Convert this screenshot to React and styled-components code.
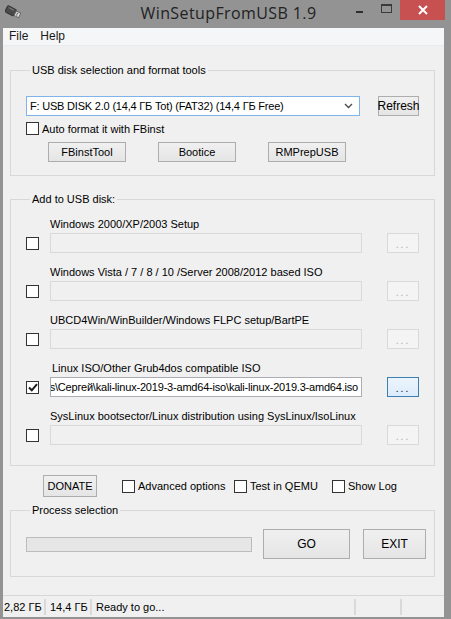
import React from 'react'
import styled, { createGlobalStyle } from 'styled-components'

const Global = createGlobalStyle`
  html, body { margin: 0; padding: 0; background: #939393; }
  * { box-sizing: border-box; }
`

const Window = styled.div`
  width: 451px;
  height: 619px;
  background: #939393;
  display: flex;
  flex-direction: column;
  font-family: "Liberation Sans", Arial, sans-serif;
  font-size: 11px;
  color: #000;
`

const TitleBar = styled.div`
  height: 28px;
  display: grid;
  grid-template-columns: 1fr auto 1fr;
  align-items: start;
`

const AppIcon = styled.div`
  padding: 5px 0 0 5px;
  display: flex;
`

const Title = styled.div`
  font-family: "Open Sans", "Noto Sans", sans-serif;
  font-size: 16px;
  letter-spacing: 0.4px;
  line-height: 26px;
  color: #222;
  padding-left: 6px;
`

const Controls = styled.div`
  justify-self: end;
  display: flex;
  align-items: flex-start;
  margin-right: 6px;
`

const MinBtn = styled.div`
  width: 7px;
  height: 2px;
  background: #2e2e2e;
  margin-top: 11px;
  margin-right: 18px;
`

const MaxBtn = styled.div`
  width: 11px;
  height: 9px;
  border: 1px solid #3a3a3a;
  border-top-width: 2px;
  margin-top: 4px;
  margin-right: 8px;
`

const CloseBtn = styled.div`
  width: 45px;
  height: 20px;
  background: #c75050;
  display: flex;
  align-items: center;
  justify-content: center;
`

const Client = styled.div`
  flex: 1;
  margin: 0 7px 2px 3px;
  background: #f0f0f0;
  display: flex;
  flex-direction: column;
`

const MenuBar = styled.div`
  height: 18px;
  background: #f5f6f7;
  border-bottom: 1px solid #e9eaeb;
  display: flex;
  align-items: center;
  font-size: 12px;
  color: #1a1a1a;
`

const MenuItem = styled.span`
  padding: 0 6px;
  line-height: 17px;
`

const Group = styled.fieldset`
  margin: ${p => p.$top}px 9px 0 7px;
  padding: ${p => p.$pt}px 15px ${p => p.$pb}px 15px;
  border: 1px solid #d8d8d8;
  min-width: 0;
`

const Legend = styled.legend`
  padding: 0 2px;
  margin-left: 4px;
  line-height: 14px;
  font-size: 11px;
  color: #000;
`

const Row = styled.div`
  display: flex;
  align-items: center;
  gap: ${p => p.$gap || 0}px;
  margin-top: ${p => p.$mt || 0}px;
  padding-left: ${p => p.$pl || 0}px;
`

const Combo = styled.div`
  width: 336px;
  height: 20px;
  background: #fff;
  border: 1px solid #7eb4ea;
  display: flex;
  align-items: center;
  justify-content: space-between;
  padding: 0 6px 0 3px;
  font-size: 11px;
  letter-spacing: -0.2px;
  white-space: nowrap;
`

const Button = styled.div`
  width: ${p => p.$w}px;
  height: ${p => p.$h || 20}px;
  margin-left: ${p => p.$ml || 0}px;
  margin-right: ${p => p.$mr || 0}px;
  border: 1px solid ${p => (p.$focus ? '#3c7fb1' : p.$disabled ? '#d9d9d9' : '#adadad')};
  background: ${p =>
    p.$focus
      ? 'linear-gradient(#ecf4fc, #dcecfc)'
      : p.$disabled
      ? '#f4f4f4'
      : 'linear-gradient(#f0f0f0, #e5e5e5)'};
  color: ${p => (p.$disabled ? '#a8a8a8' : '#000')};
  display: flex;
  align-items: center;
  justify-content: center;
  font-size: ${p => p.$fs || 11}px;
  flex-shrink: 0;
`

const Box = styled.div`
  width: 13px;
  height: 13px;
  border: 1px solid #333;
  background: #fff;
  display: flex;
  align-items: center;
  justify-content: center;
  flex-shrink: 0;
`

const CheckItem = styled.label`
  display: flex;
  align-items: center;
  gap: 3px;
  width: ${p => (p.$w ? `${p.$w}px` : 'auto')};
  white-space: nowrap;
`

const Entry = styled.div`
  margin-top: ${p => (p.$first ? 0 : 12)}px;
`

const EntryLabel = styled.div`
  line-height: 14px;
  margin: 0 0 2px ${p => 24 + (p.$indent || 0)}px;
  white-space: nowrap;
`

const Field = styled.div`
  width: 312px;
  height: 20px;
  margin-left: 11px;
  border: 1px solid ${p => (p.$active ? '#abadb3' : '#d9d9d9')};
  background: ${p => (p.$active ? '#fff' : '#f0f0f0')};
  display: flex;
  align-items: center;
  justify-content: flex-end;
  overflow: hidden;
  white-space: nowrap;
  padding-right: 3px;
  letter-spacing: -0.2px;
`

const FieldText = styled.span`
  flex-shrink: 0;
`

const Dots = styled.span`
  letter-spacing: 2px;
  font-size: 10px;
  margin-top: 2px;
`

const Progress = styled.div`
  width: 226px;
  height: 15px;
  border: 1px solid #bcbcbc;
  background: #e6e6e6;
  flex-shrink: 0;
`

const StatusBar = styled.div`
  margin-top: auto;
  height: 22px;
  border-top: 1px solid #d7d7d7;
  display: flex;
  align-items: stretch;
`

const Panel = styled.div`
  width: ${p => (p.$w ? `${p.$w}px` : 'auto')};
  flex: ${p => (p.$w ? '0 0 auto' : 1)};
  display: flex;
  align-items: center;
  padding-left: ${p => p.$pl || 3}px;
  margin: 3px 0 2px;
  border-right: 2px solid ${p => (p.$last ? 'transparent' : '#d9d9d9')};
  white-space: nowrap;
`

function UsbIcon() {
  return (
    <svg width="17" height="14" viewBox="0 0 17 14">
      <g transform="rotate(28 8 7)">
        <rect x="0.5" y="3.5" width="10" height="7" rx="1.5" fill="#4a4a4a" stroke="#333" />
        <rect x="10.5" y="4.5" width="5" height="5" fill="#e8e8e8" stroke="#6a6a6a" />
        <rect x="12" y="5.7" width="1.4" height="1.2" fill="#555" />
        <rect x="12" y="7.3" width="1.4" height="1.2" fill="#555" />
        <rect x="2" y="4.5" width="6" height="1.2" fill="#777" />
      </g>
    </svg>
  )
}

function CloseX() {
  return (
    <svg width="10" height="10" viewBox="0 0 10 10">
      <path d="M1 1 L9 9 M9 1 L1 9" stroke="#fff" strokeWidth="2" />
    </svg>
  )
}

function Chevron() {
  return (
    <svg width="9" height="6" viewBox="0 0 9 6">
      <path d="M1 1 L4.5 4.5 L8 1" stroke="#4d4d4d" strokeWidth="1.4" fill="none" />
    </svg>
  )
}

function Check() {
  return (
    <svg width="10" height="9" viewBox="0 0 10 9">
      <path d="M1 4.5 L3.8 7.3 L9 1.2" stroke="#1a1a1a" strokeWidth="2" fill="none" />
    </svg>
  )
}

const entries = [
  { label: 'Windows 2000/XP/2003 Setup' },
  { label: 'Windows Vista / 7 / 8 / 10 /Server 2008/2012 based ISO' },
  { label: 'UBCD4Win/WinBuilder/Windows FLPC setup/BartPE' },
  {
    label: 'Linux ISO/Other Grub4dos compatible ISO',
    indent: 2,
    checked: true,
    value: 'C:\\Users\\Сергей\\kali-linux-2019-3-amd64-iso\\kali-linux-2019.3-amd64.iso',
  },
  { label: 'SysLinux bootsector/Linux distribution using SysLinux/IsoLinux' },
]

export default function App() {
  return (
    <>
      <Global />
      <Window>
        <TitleBar>
          <AppIcon><UsbIcon /></AppIcon>
          <Title>WinSetupFromUSB 1.9</Title>
          <Controls>
            <MinBtn />
            <MaxBtn />
            <CloseBtn><CloseX /></CloseBtn>
          </Controls>
        </TitleBar>

        <Client>
          <MenuBar>
            <MenuItem>File</MenuItem>
            <MenuItem>Help</MenuItem>
          </MenuBar>

          <Group $top={17} $pt={19} $pb={13}>
            <Legend>USB disk selection and format tools</Legend>
            <Row $gap={18}>
              <Combo>
                <span>F: USB DISK 2.0 (14,4 ГБ Tot) (FAT32) (14,4 ГБ Free)</span>
                <Chevron />
              </Combo>
              <Button $w={41} $fs={12}>Refresh</Button>
            </Row>
            <Row $mt={6}>
              <CheckItem>
                <Box />
                Auto format it with FBinst
              </CheckItem>
            </Row>
            <Row $mt={7} $pl={22} $gap={32}>
              <Button $w={78}>FBinstTool</Button>
              <Button $w={78}>Bootice</Button>
              <Button $w={78}>RMPrepUSB</Button>
            </Row>
          </Group>

          <Group $top={16} $pt={11} $pb={20}>
            <Legend>Add to USB disk:</Legend>
            {entries.map((e, i) => (
              <Entry key={i} $first={i === 0}>
                <EntryLabel $indent={e.indent}>{e.label}</EntryLabel>
                <Row>
                  <Box>{e.checked && <Check />}</Box>
                  <Field $active={!!e.value}>
                    {e.value && <FieldText>{e.value}</FieldText>}
                  </Field>
                  <Button $w={32} $ml={25} $disabled={!e.checked} $focus={e.checked}>
                    <Dots>...</Dots>
                  </Button>
                </Row>
              </Entry>
            ))}
          </Group>

          <Row $mt={9} $pl={40}>
            <Button $w={54} $h={22} $mr={25}>DONATE</Button>
            <CheckItem $w={112}><Box />Advanced options</CheckItem>
            <CheckItem $w={98}><Box />Test in QEMU</CheckItem>
            <CheckItem><Box />Show Log</CheckItem>
          </Row>

          <Group $top={6} $pt={12} $pb={17}>
            <Legend>Process selection</Legend>
            <Row>
              <Progress />
              <Button $w={87} $h={30} $fs={12} $ml={11}>GO</Button>
              <Button $w={63} $h={30} $fs={12} $ml={13}>EXIT</Button>
            </Row>
          </Group>

          <StatusBar>
            <Panel $w={43} $pl={1}>2,82 ГБ</Panel>
            <Panel $w={46} $pl={4}>14,4 ГБ</Panel>
            <Panel $pl={4}>Ready to go...</Panel>
            <Panel $w={46} />
            <Panel $w={42} $last />
          </StatusBar>
        </Client>
      </Window>
    </>
  )
}
